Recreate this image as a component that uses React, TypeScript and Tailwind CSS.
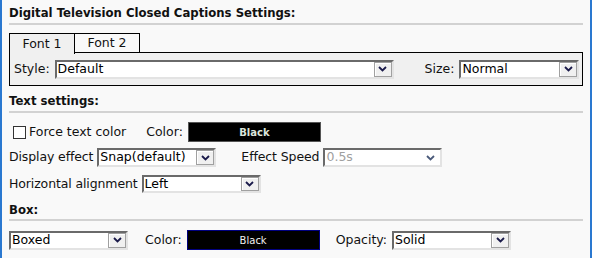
import React from 'react';

const font = "font-['DejaVu_Sans',sans-serif]";

function Chevron({ color = '#1a1a4a' }: { color?: string }) {
  return (
    <svg width="9" height="6" viewBox="0 0 9 6">
      <path d="M1 1 L4.5 4.5 L8 1" fill="none" stroke={color} strokeWidth="1.8" />
    </svg>
  );
}

function Select({ value, className, disabled }: { value: string; className: string; disabled?: boolean }) {
  return (
    <div
      className={`flex items-center bg-white border-2 border-t-[#6a6a6a] border-l-[#6a6a6a] border-b-[#e3e3e3] border-r-[#e3e3e3] ${className}`}
    >
      <span className={`flex-1 pl-[1px] leading-none ${disabled ? 'text-[#a0a0a0]' : 'text-black'}`}>{value}</span>
      {disabled ? (
        <span className="w-[19px] flex justify-center">
          <Chevron color="#4a5a7a" />
        </span>
      ) : (
        <span className="h-full w-[18px] flex items-center justify-center bg-[#f0f0f0] border border-[#a0a0a0] shadow-[inset_1px_1px_0_#ffffff]">
          <Chevron />
        </span>
      )}
    </div>
  );
}

function Heading({ children, className, gap }: { children: React.ReactNode; className: string; gap: string }) {
  return (
    <div className={className}>
      <div className={`font-bold text-[11.7px] leading-[12px] ${gap}`}>{children}</div>
      <div className="h-[2px] bg-[#d2d2d2]" />
    </div>
  );
}

export default function App() {
  return (
    <div className={`w-[592px] h-[258px] bg-[#f9f9f9] border-l-2 border-r-2 border-[#2a78d0] text-[12.5px] text-[#111] ${font}`}>
      <div className="pl-[7px] w-[581px]">
        <Heading className="pt-[7px]" gap="mb-[4px]">
          Digital Television Closed Captions Settings:
        </Heading>

        {/* tabs */}
        <div className="flex mt-[8px] h-[20px]">
          <div className="w-[66px] h-[21px] border border-b-0 border-black bg-[#f0f0f0] flex items-center justify-center relative z-10">
            Font 1
          </div>
          <div className="w-[65px] h-[20px] border border-l-0 border-black bg-[#f9f9f9] flex items-center justify-center">
            Font 2
          </div>
        </div>
        <div className="border border-black bg-[#f0f0f0] h-[34px] flex items-center pl-[4px] -mt-[1px]">
          <span className="mr-[5px]">Style:</span>
          <Select value="Default" className="w-[339px] h-[19px]" />
          <span className="ml-[31px] mr-[5px]">Size:</span>
          <Select value="Normal" className="w-[120px] h-[19px]" />
        </div>

        <Heading className="pt-[9px]" gap="mb-[4px]">
          Text settings:
        </Heading>

        <div className="flex items-center mt-[9px] h-[20px]">
          <span className="ml-[4px] w-[13px] h-[13px] border border-[#333] bg-white" />
          <span className="ml-[3px]">Force text color</span>
          <span className="ml-[20px]">Color:</span>
          <div className="ml-[5px] w-[133px] h-[20px] bg-black border border-[#555] flex items-center justify-center text-[10px] font-semibold text-[#dce4dc]">
            Black
          </div>
        </div>

        <div className="flex items-center mt-[6px] h-[19px]">
          <span className="tracking-[-0.12px]">Display effect</span>
          <Select value="Snap(default)" className="ml-[4px] w-[119px] h-[19px]" />
          <span className="ml-[25px] tracking-[-0.1px]">Effect Speed</span>
          <Select value="0.5s" disabled className="ml-[4px] w-[119px] h-[19px]" />
        </div>

        <div className="flex items-center mt-[8px] h-[18px]">
          <span className="tracking-[-0.12px]">Horizontal alignment</span>
          <Select value="Left" className="ml-[4px] w-[119px] h-[18px]" />
        </div>

        <Heading className="pt-[11px]" gap="mb-[3px]">
          Box:
        </Heading>

        <div className="flex items-center mt-[9px] h-[20px]">
          <Select value="Boxed" className="w-[119px] h-[19px]" />
          <span className="ml-[17px]">Color:</span>
          <div className="ml-[5px] w-[133px] h-[20px] bg-black border border-[#000080] flex items-center justify-center text-[10px] text-[#f0f0f0]">
            Black
          </div>
          <span className="ml-[16px]">Opacity:</span>
          <Select value="Solid" className="ml-[5px] w-[119px] h-[19px]" />
        </div>
      </div>
    </div>
  );
}
